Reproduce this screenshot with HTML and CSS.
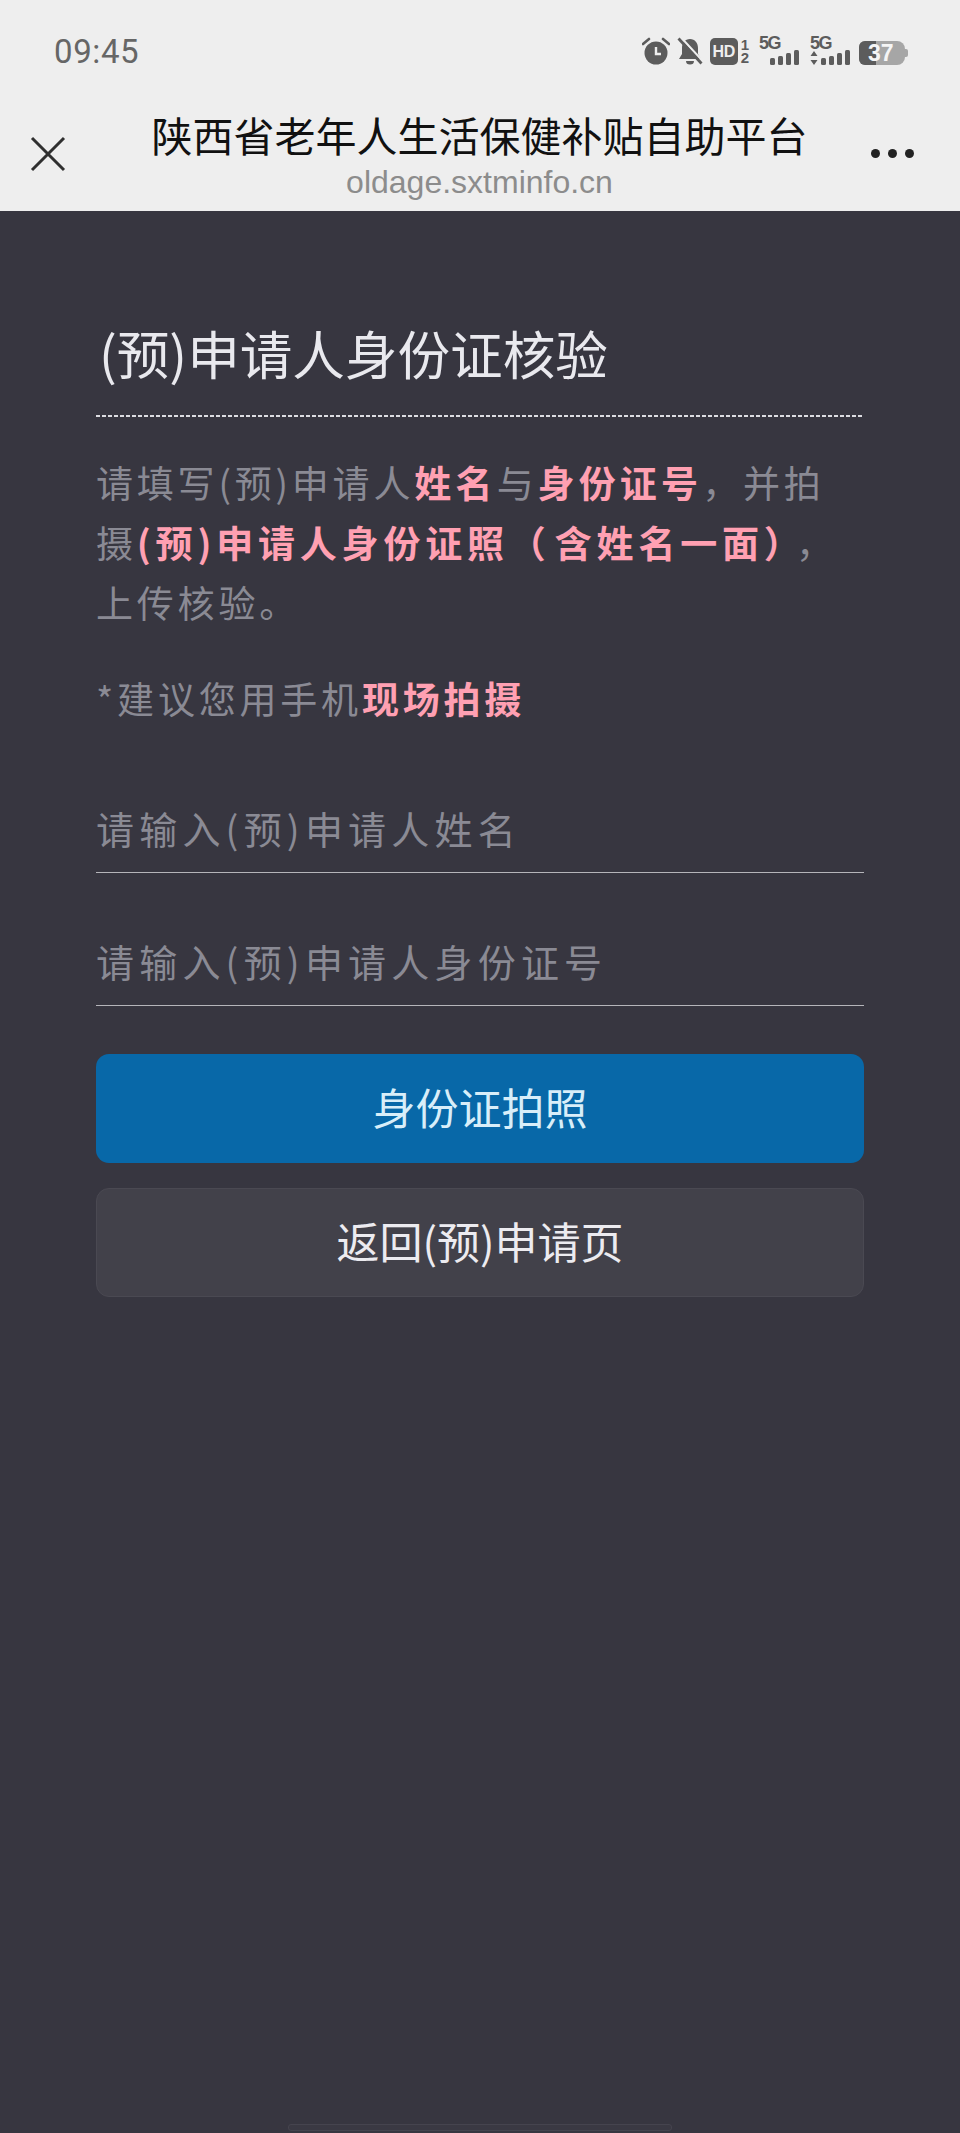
FILE: index.html
```html
<!DOCTYPE html>
<html lang="zh-CN">
<head>
<meta charset="utf-8">
<title>陕西省老年人生活保健补贴自助平台</title>
<link rel="stylesheet" href="styles.css">
</head>
<body>
<div class="app">
  <header class="chrome">
    <div class="status">
      <span class="time">09:45</span>
      <div class="status-icons">
        <svg class="ic-alarm" width="28" height="28" viewBox="0 0 28 28"><circle cx="14" cy="16" r="11.5" fill="#5c5c5c"/><path d="M14 10v7h5" fill="none" stroke="#eee" stroke-width="2.4"/><path d="M1 7l6-5M27 7l-6-5" stroke="#5c5c5c" stroke-width="2.6" stroke-linecap="round"/></svg>
        <svg class="ic-bell" width="26" height="28" viewBox="0 0 26 28"><path d="M13 2c5 0 8 4 8 9v6l3 5H2l3-5v-6c0-5 3-9 8-9z" fill="#5c5c5c"/><path d="M9 24a4 3.5 0 0 0 8 0z" fill="#5c5c5c"/><path d="M4 .5l23 25" stroke="#eee" stroke-width="2.2"/><path d="M1.500 1.500l23 25" stroke="#5c5c5c" stroke-width="2.800"/></svg>
        <div class="hd"><span class="hd-box">HD</span><span class="hd-nums"><span>1</span><span>2</span></span></div>
        <div class="net">
          <span class="net-label">5G</span>
          <div class="bars"><i class="b1"></i><i class="b2"></i><i class="b3"></i><i class="b4"></i></div>
        </div>
        <div class="net net-two">
          <span class="net-label">5G</span>
          <svg class="arrows" width="8" height="16" viewBox="0 0 8 16"><path d="M4 1l3.500 5H.5zM4 15L.5 10h7z" fill="#5c5c5c"/></svg>
          <div class="bars"><i class="b1"></i><i class="b2"></i><i class="b3"></i><i class="b4"></i></div>
        </div>
        <div class="battery"><span class="battery-fill"></span><span class="battery-num">37</span><span class="battery-cap"></span></div>
      </div>
    </div>
    <div class="nav">
      <svg class="close" width="36" height="36" viewBox="0 0 36 36"><path d="M2 2l32 32M34 2L2 34" stroke="#2f2f2f" stroke-width="3" fill="none"/></svg>
      <div class="nav-title">
        <h1>陕西省老年人生活保健补贴自助平台</h1>
        <p>oldage.sxtminfo.cn</p>
      </div>
      <div class="more"><i></i><i></i><i></i></div>
    </div>
  </header>
  <main class="content">
    <h2>(预)申请人身份证核验</h2>
    <p class="desc">请填写(预)申请人<b>姓名</b>与<b>身份证号</b>，并拍<br>摄<b class="wide">(预)申请人身份证照（ 含姓名一面）</b><span class="comma">，</span><br>上传核验。</p>
    <p class="tip">*建议您用手机<b>现场拍摄</b></p>
    <input class="field" type="text" placeholder="请输入(预)申请人姓名">
    <input class="field" type="text" placeholder="请输入(预)申请人身份证号">
    <button class="btn btn-primary" type="button">身份证拍照</button>
    <button class="btn btn-secondary" type="button">返回(预)申请页</button>
  </main>
  <div class="home-bar"></div>
</div>
</body>
</html>
```
FILE: styles.css
```css
* { box-sizing: border-box; }
html, body { margin: 0; padding: 0; }
body { font-family: "Noto Sans CJK SC", "Noto Sans", sans-serif; background: #373640; }
.app { position: relative; width: 960px; height: 2133px; display: flex; flex-direction: column; overflow: hidden; }

.chrome { height: 211px; background: #eeeeee; flex: none; }
.status { height: 90px; display: flex; align-items: center; justify-content: space-between; padding: 12px 52px 0 54px; }
.time { font-family: Roboto, sans-serif; font-size: 33px; color: #666; letter-spacing: 0.6px; }
.status-icons { display: flex; align-items: center; color: #5c5c5c; }
.ic-alarm { margin-right: 7px; }
.ic-bell { margin-right: 7px; }
.hd { display: flex; align-items: center; margin-right: 10px; }
.hd-box { width: 28px; height: 27px; border-radius: 5px; background: #5c5c5c; color: #eee; font: 700 16px/27px "Liberation Sans", sans-serif; letter-spacing: -0.5px; text-align: center; }
.hd-nums { display: flex; flex-direction: column; font: 700 15px/13px "Liberation Sans", sans-serif; margin-left: 3px; }
.net { position: relative; width: 40px; height: 28px; margin-right: 11px; }
.net-two { margin-right: 9px; }
.net-label { position: absolute; left: 0; top: -3px; font: 700 18px/18px "Liberation Sans", sans-serif; letter-spacing: -1.5px; }
.arrows { position: absolute; left: 0; top: 13px; }
.bars { position: absolute; right: 0; bottom: 0; display: flex; align-items: flex-end; gap: 3px; }
.bars i { display: block; width: 5px; background: #5c5c5c; border-radius: 1.500px; }
.bars .b1 { height: 7px; } .bars .b2 { height: 9px; } .bars .b3 { height: 12px; } .bars .b4 { height: 15px; }
.battery { position: relative; width: 46px; height: 24px; margin-top: 3px; margin-right: 3px; background: #a6a6a6; border-radius: 6px 8px 8px 6px; }
.battery-fill { position: absolute; left: 0; top: 0; bottom: 0; width: 17px; background: #5c5c5c; border-radius: 6px 0 0 6px; }
.battery-num { position: absolute; left: 9px; top: 0; font: 700 23px/24px "Liberation Sans", sans-serif; color: #f5f5f5; }
.battery-cap { position: absolute; right: -3px; top: 8px; width: 3px; height: 8px; background: #a6a6a6; border-radius: 0 2px 2px 0; }

.nav { height: 121px; display: flex; align-items: flex-start; padding: 0 46px 0 30px; }
.close { margin-top: 46px; flex: none; }
.nav-title { flex: 1; text-align: center; padding-left: 22px; }
.nav-title h1 { margin: 15px 0 0; font-size: 41px; line-height: 58px; font-weight: 400; color: #111111; white-space: nowrap; }
.nav-title p { margin: 4px 0 0; font-family: "Liberation Sans", sans-serif; font-size: 32px; line-height: 30px; color: #8c8c8c; }
.more { display: flex; gap: 8px; margin-top: 59px; flex: none; }
.more i { width: 9px; height: 9px; border-radius: 50%; background: #222; }

.content { flex: 1; display: flex; flex-direction: column; padding: 107px 96px 0 96px; }
h2 { margin: 0; padding: 0 0 0 3px; height: 99px; background: repeating-linear-gradient(90deg, #dcdce1 0 4px, transparent 4px 6px) left bottom / 100% 2px no-repeat; font-size: 52.600px; line-height: 68px; font-weight: 400; color: #e9e9ee; white-space: nowrap; }
.desc { margin: 35px 0 0; font-size: 37px; line-height: 60px; letter-spacing: 3.800px; color: #8a8a94; white-space: nowrap; }
.tip { margin: 36px 0 0; font-size: 37px; line-height: 60px; letter-spacing: 3.800px; color: #8a8a94; white-space: nowrap; }
.desc b, .tip b { color: #ffa0b2; font-weight: 700; }
.desc b { letter-spacing: 4.200px; }
.desc .wide { letter-spacing: 4.800px; word-spacing: -9px; }
.comma { margin-left: 9px; }
.field { display: block; width: 100%; height: 133px; padding: 42px 0 0; border: 0; border-bottom: 1.500px solid #b5b5ba; background: transparent; font-family: inherit; font-size: 38px; letter-spacing: 5.200px; color: #8a8a94; outline: none; flex: none; }
.field::placeholder { color: #8a8a94; opacity: 1; }
.tip + .field { margin-top: 12px; }
.btn { display: block; width: 100%; height: 109px; border-radius: 13px; font-family: inherit; font-size: 43px; padding: 0 0 6px; flex: none; }
.btn-primary { margin-top: 48px; border: 0; background: #0868a8; color: #d8eef9; }
.btn-secondary { margin-top: 25px; border: 1.500px solid #4a4952; background: #42414a; color: #ecebf0; }

.home-bar { position: absolute; left: 288px; top: 2124px; width: 384px; height: 7px; border-radius: 3px; background: #3a3943; border: 1px solid #45444e; }
```
